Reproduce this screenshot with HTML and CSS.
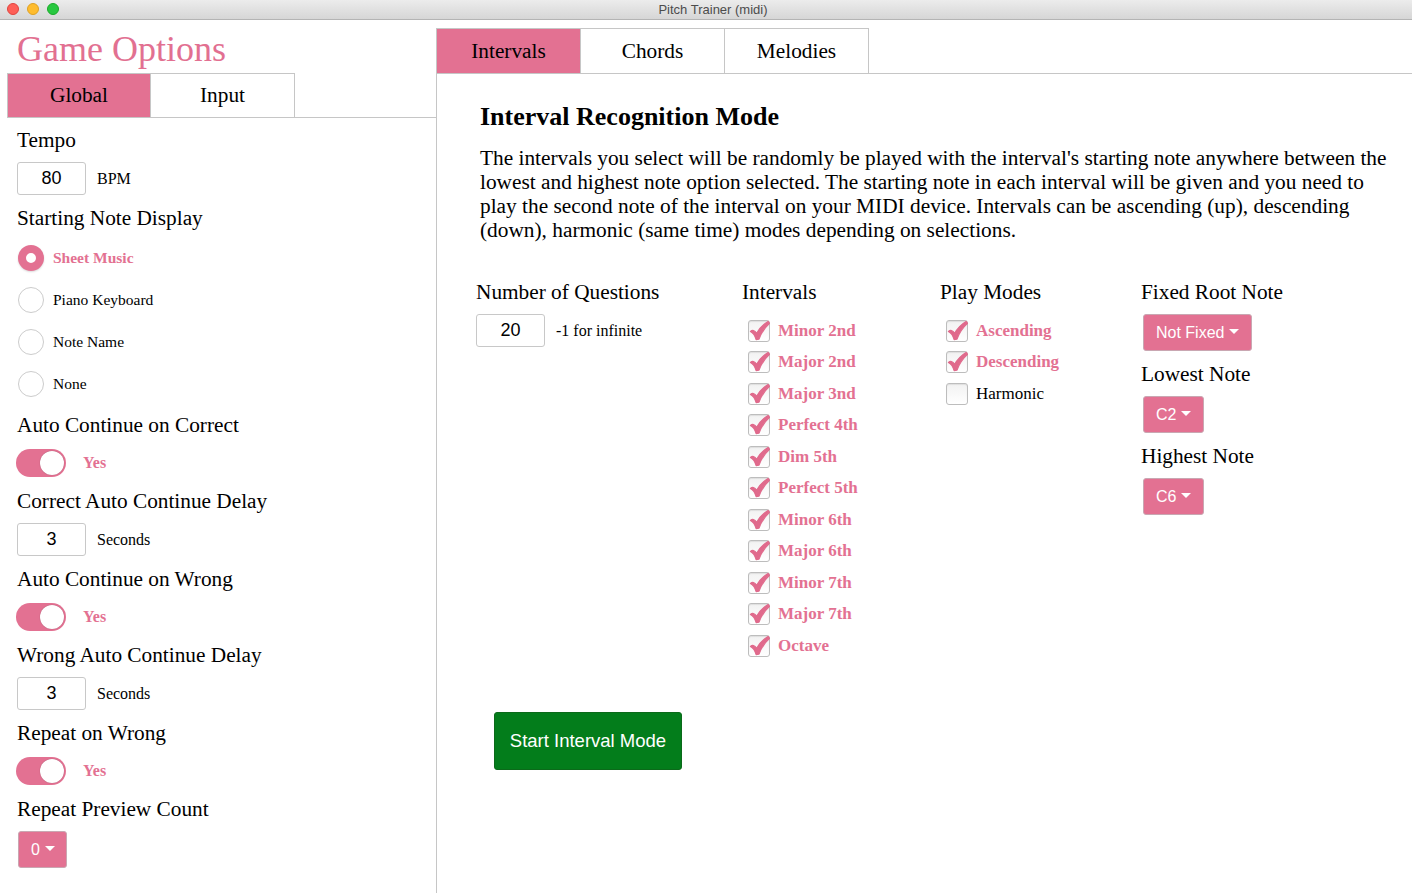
FILE: index.html
```html
<!DOCTYPE html>
<html>
<head>
<meta charset="utf-8">
<title>Pitch Trainer (midi)</title>
<link rel="stylesheet" href="styles.css">
</head>
<body>
<div class="window">
  <div class="titlebar">
    <div class="lights">
      <span class="light red"></span>
      <span class="light yellow"></span>
      <span class="light green"></span>
    </div>
    <div class="title">Pitch Trainer (midi)</div>
  </div>
  <div class="main">
    <aside class="options">
      <h1 class="options-title">Game Options</h1>
      <div class="tabs tabs-left">
        <div class="tab active">Global</div>
        <div class="tab">Input</div>
      </div>
      <div class="opt-body">
        <div class="label">Tempo</div>
        <div class="ctrl">
          <div class="num">80</div><span class="unit">BPM</span>
        </div>
        <div class="label">Starting Note Display</div>
        <div class="radios">
          <div class="radio-row"><span class="radio on"></span><span class="rlabel on">Sheet Music</span></div>
          <div class="radio-row"><span class="radio"></span><span class="rlabel">Piano Keyboard</span></div>
          <div class="radio-row"><span class="radio"></span><span class="rlabel">Note Name</span></div>
          <div class="radio-row"><span class="radio"></span><span class="rlabel">None</span></div>
        </div>
        <div class="label">Auto Continue on Correct</div>
        <div class="ctrl toggle-row"><span class="toggle"><span class="knob"></span></span><span class="yes">Yes</span></div>
        <div class="label">Correct Auto Continue Delay</div>
        <div class="ctrl">
          <div class="num">3</div><span class="unit">Seconds</span>
        </div>
        <div class="label">Auto Continue on Wrong</div>
        <div class="ctrl toggle-row"><span class="toggle"><span class="knob"></span></span><span class="yes">Yes</span></div>
        <div class="label">Wrong Auto Continue Delay</div>
        <div class="ctrl">
          <div class="num">3</div><span class="unit">Seconds</span>
        </div>
        <div class="label">Repeat on Wrong</div>
        <div class="ctrl toggle-row"><span class="toggle"><span class="knob"></span></span><span class="yes">Yes</span></div>
        <div class="label">Repeat Preview Count</div>
        <div class="ctrl">
          <div class="dropdown small">0<span class="caret"></span></div>
        </div>
      </div>
    </aside>
    <section class="modes">
      <div class="tabs tabs-right">
        <div class="tab active">Intervals</div>
        <div class="tab">Chords</div>
        <div class="tab">Melodies</div>
      </div>
      <div class="mode-body">
        <h2 class="mode-title">Interval Recognition Mode</h2>
        <p class="desc">The intervals you select will be randomly be played with the interval's starting note anywhere between the lowest and highest note option selected. The starting note in each interval will be given and you need to play the second note of the interval on your MIDI device. Intervals can be ascending (up), descending (down), harmonic (same time) modes depending on selections.</p>
        <div class="grid">
          <div class="col">
            <div class="label">Number of Questions</div>
            <div class="ctrl">
              <div class="num">20</div><span class="unit">-1 for infinite</span>
            </div>
          </div>
          <div class="col">
            <div class="label">Intervals</div>
            <div class="checks">
              <div class="check-row"><span class="cbox"><svg viewBox="0 0 22 22"><path d="M1.5 12 C3.5 10.2 5.8 10.5 8 14 C11 8.5 15 4.5 20 1.5 L21.5 3.5 C16.5 8 13 13 10.5 20 L7.5 20.5 C6.5 17 4.5 13.5 1.5 12 Z"/></svg></span><span class="clabel on">Minor 2nd</span></div>
              <div class="check-row"><span class="cbox"><svg viewBox="0 0 22 22"><path d="M1.5 12 C3.5 10.2 5.8 10.5 8 14 C11 8.5 15 4.5 20 1.5 L21.5 3.5 C16.5 8 13 13 10.5 20 L7.5 20.5 C6.5 17 4.5 13.5 1.5 12 Z"/></svg></span><span class="clabel on">Major 2nd</span></div>
              <div class="check-row"><span class="cbox"><svg viewBox="0 0 22 22"><path d="M1.5 12 C3.5 10.2 5.8 10.5 8 14 C11 8.5 15 4.5 20 1.5 L21.5 3.5 C16.5 8 13 13 10.5 20 L7.5 20.5 C6.5 17 4.5 13.5 1.5 12 Z"/></svg></span><span class="clabel on">Major 3nd</span></div>
              <div class="check-row"><span class="cbox"><svg viewBox="0 0 22 22"><path d="M1.5 12 C3.5 10.2 5.8 10.5 8 14 C11 8.5 15 4.5 20 1.5 L21.5 3.5 C16.5 8 13 13 10.5 20 L7.5 20.5 C6.5 17 4.5 13.5 1.5 12 Z"/></svg></span><span class="clabel on">Perfect 4th</span></div>
              <div class="check-row"><span class="cbox"><svg viewBox="0 0 22 22"><path d="M1.5 12 C3.5 10.2 5.8 10.5 8 14 C11 8.5 15 4.5 20 1.5 L21.5 3.5 C16.5 8 13 13 10.5 20 L7.5 20.5 C6.5 17 4.5 13.5 1.5 12 Z"/></svg></span><span class="clabel on">Dim 5th</span></div>
              <div class="check-row"><span class="cbox"><svg viewBox="0 0 22 22"><path d="M1.5 12 C3.5 10.2 5.8 10.5 8 14 C11 8.5 15 4.5 20 1.5 L21.5 3.5 C16.5 8 13 13 10.5 20 L7.5 20.5 C6.5 17 4.5 13.5 1.5 12 Z"/></svg></span><span class="clabel on">Perfect 5th</span></div>
              <div class="check-row"><span class="cbox"><svg viewBox="0 0 22 22"><path d="M1.5 12 C3.5 10.2 5.8 10.5 8 14 C11 8.5 15 4.5 20 1.5 L21.5 3.5 C16.5 8 13 13 10.5 20 L7.5 20.5 C6.5 17 4.5 13.5 1.5 12 Z"/></svg></span><span class="clabel on">Minor 6th</span></div>
              <div class="check-row"><span class="cbox"><svg viewBox="0 0 22 22"><path d="M1.5 12 C3.5 10.2 5.8 10.5 8 14 C11 8.5 15 4.5 20 1.5 L21.5 3.5 C16.5 8 13 13 10.5 20 L7.5 20.5 C6.5 17 4.5 13.5 1.5 12 Z"/></svg></span><span class="clabel on">Major 6th</span></div>
              <div class="check-row"><span class="cbox"><svg viewBox="0 0 22 22"><path d="M1.5 12 C3.5 10.2 5.8 10.5 8 14 C11 8.5 15 4.5 20 1.5 L21.5 3.5 C16.5 8 13 13 10.5 20 L7.5 20.5 C6.5 17 4.5 13.5 1.5 12 Z"/></svg></span><span class="clabel on">Minor 7th</span></div>
              <div class="check-row"><span class="cbox"><svg viewBox="0 0 22 22"><path d="M1.5 12 C3.5 10.2 5.8 10.5 8 14 C11 8.5 15 4.5 20 1.5 L21.5 3.5 C16.5 8 13 13 10.5 20 L7.5 20.5 C6.5 17 4.5 13.5 1.5 12 Z"/></svg></span><span class="clabel on">Major 7th</span></div>
              <div class="check-row"><span class="cbox"><svg viewBox="0 0 22 22"><path d="M1.5 12 C3.5 10.2 5.8 10.5 8 14 C11 8.5 15 4.5 20 1.5 L21.5 3.5 C16.5 8 13 13 10.5 20 L7.5 20.5 C6.5 17 4.5 13.5 1.5 12 Z"/></svg></span><span class="clabel on">Octave</span></div>
            </div>
          </div>
          <div class="col">
            <div class="label">Play Modes</div>
            <div class="checks">
              <div class="check-row"><span class="cbox"><svg viewBox="0 0 22 22"><path d="M1.5 12 C3.5 10.2 5.8 10.5 8 14 C11 8.5 15 4.5 20 1.5 L21.5 3.5 C16.5 8 13 13 10.5 20 L7.5 20.5 C6.5 17 4.5 13.5 1.5 12 Z"/></svg></span><span class="clabel on">Ascending</span></div>
              <div class="check-row"><span class="cbox"><svg viewBox="0 0 22 22"><path d="M1.5 12 C3.5 10.2 5.8 10.5 8 14 C11 8.5 15 4.5 20 1.5 L21.5 3.5 C16.5 8 13 13 10.5 20 L7.5 20.5 C6.5 17 4.5 13.5 1.5 12 Z"/></svg></span><span class="clabel on">Descending</span></div>
              <div class="check-row"><span class="cbox"></span><span class="clabel">Harmonic</span></div>
            </div>
          </div>
          <div class="col">
            <div class="label">Fixed Root Note</div>
            <div class="ctrl ctrl-dd">
              <div class="dropdown">Not Fixed<span class="caret"></span></div>
            </div>
            <div class="label">Lowest Note</div>
            <div class="ctrl ctrl-dd">
              <div class="dropdown">C2<span class="caret"></span></div>
            </div>
            <div class="label">Highest Note</div>
            <div class="ctrl ctrl-dd">
              <div class="dropdown">C6<span class="caret"></span></div>
            </div>
          </div>
        </div>
        <div class="start">Start Interval Mode</div>
      </div>
    </section>
  </div>
</div>
</body>
</html>
```

FILE: styles.css
```css
* { box-sizing: border-box; }
html, body { margin: 0; padding: 0; background: #fff; }
body {
  width: 1412px;
  height: 893px;
  overflow: hidden;
  font-family: "Liberation Serif", "Times New Roman", serif;
  color: #000;
}
.window { display: flex; flex-direction: column; height: 893px; }

.titlebar {
  height: 20px;
  flex: none;
  background: linear-gradient(#ececec, #d6d6d6);
  border-bottom: 1px solid #b4b4b4;
  display: flex;
  align-items: center;
  justify-content: center;
  padding-left: 14px;
  position: relative;
}
.lights { position: absolute; left: 7px; top: 3px; display: flex; gap: 8px; }
.light { width: 12px; height: 12px; border-radius: 50%; display: block; }
.light.red { background: #fe5f57; border: 1px solid #e0443e; }
.light.yellow { background: #febc2e; border: 1px solid #dea123; }
.light.green { background: #28c840; border: 1px solid #1aab29; }
.title {
  font-family: "Liberation Sans", Arial, sans-serif;
  font-size: 13px;
  color: #4c4c4c;
  line-height: 19px;
}

.main { display: flex; flex: 1; min-height: 0; }

.options { width: 436px; flex: none; }
.options-title {
  margin: 0 0 3px 17px;
  padding-top: 8px;
  font-weight: normal;
  font-size: 36px;
  line-height: 42px;
  color: #e27091;
}

.tabs { display: flex; border-bottom: 1px solid #c6c6c6; }
.tab {
  width: 144px;
  text-align: center;
  font-size: 21.3px;
  border-top: 1px solid #c6c6c6;
  border-right: 1px solid #c6c6c6;
}
.tab.active { background: #e37192; }
.tabs-left { margin-left: 7px; }
.tabs-left .tab { height: 44px; line-height: 43px; }
.tabs-left .tab:first-child { border-left: 1px solid #c6c6c6; }
.tabs-right .tab { height: 45px; line-height: 44px; }

.opt-body { padding: 9px 0 0 17px; display: flex; flex-direction: column; align-items: flex-start; }
.label { font-size: 21.3px; line-height: 26px; white-space: nowrap; }
.ctrl { margin: 9px 0 10px; display: flex; align-items: center; }
.num {
  width: 69px;
  height: 33px;
  border: 1px solid #c8c8c8;
  border-radius: 3px;
  font-family: "Liberation Sans", Arial, sans-serif;
  font-size: 18px;
  line-height: 31px;
  text-align: center;
}
.unit { font-size: 16px; margin-left: 11px; }

.radios { margin: 6px 0 7px; }
.radio-row { height: 42px; display: flex; align-items: center; }
.radio {
  width: 26px;
  height: 26px;
  border-radius: 50%;
  border: 1px solid #cccccc;
  margin-left: 1px;
  display: block;
}
.radio.on {
  border: 8px solid #e37192;
  background: #fff;
  box-shadow: 0 1px 2px rgba(0,0,0,0.15);
}
.rlabel { font-size: 15.5px; margin-left: 9px; }
.rlabel.on { color: #e37192; font-weight: bold; }

.toggle-row { height: 32px; margin: 9px 0 9px; }
.toggle {
  width: 50px;
  height: 28px;
  border-radius: 14px;
  background: #e37192;
  display: block;
  position: relative;
  margin-left: -1px;
}
.knob {
  position: absolute;
  right: 2px;
  top: 2px;
  width: 24px;
  height: 24px;
  border-radius: 50%;
  background: #fff;
  box-shadow: 0 0 1px rgba(0,0,0,0.35);
}
.yes { color: #e37192; font-weight: bold; font-size: 16px; margin-left: 17px; }

.dropdown {
  height: 37px;
  padding: 0 12px 0 12px;
  border: 1px solid #c9a7b2;
  border-radius: 3px;
  background: #e37192;
  color: #fff;
  font-family: "Liberation Sans", Arial, sans-serif;
  font-size: 16px;
  line-height: 35px;
  display: flex;
  align-items: center;
}
.dropdown.small { padding: 0 11px 0 12px; margin-left: 1px; }
.caret {
  width: 0;
  height: 0;
  border-left: 5px solid transparent;
  border-right: 5px solid transparent;
  border-top: 5px solid #fff;
  margin-left: 5px;
  margin-top: -2px;
}

.modes { flex: 1; border-left: 1px solid #c6c6c6; margin-top: 8px; }
.mode-body { padding-left: 43px; }
.mode-title {
  margin: 28px 0 0;
  font-size: 26px;
  line-height: 30px;
  font-weight: bold;
}
.desc {
  margin: 14px 0 0;
  width: 918px;
  font-size: 21.33px;
  line-height: 24px;
}

.grid {
  display: grid;
  grid-template-columns: 266px 198px 201px 1fr;
  margin: 37px 0 0 -4px;
}
.col { display: flex; flex-direction: column; align-items: flex-start; }
.checks { margin-top: 10px; }
.check-row { height: 31.5px; display: flex; align-items: center; }
.cbox {
  width: 22px;
  height: 22px;
  margin-left: 6px;
  border: 1px solid #bdbdbd;
  border-radius: 3px;
  background: linear-gradient(#f2f2f2, #ffffff);
  box-shadow: inset 0 1px 1px rgba(0,0,0,0.08);
  position: relative;
  display: block;
}
.cbox svg {
  position: absolute;
  left: 0;
  top: -1px;
  width: 21px;
  height: 21px;
  fill: #e06a8c;
  stroke: #e06a8c;
  stroke-width: 1.3;
  stroke-linejoin: round;
}
.clabel { font-size: 17px; margin-left: 8px; }
.clabel.on { color: #e37192; font-weight: bold; }
.ctrl-dd { margin: 9px 0 10px 2px; }

.start {
  display: inline-block;
  margin: 50px 0 0 14px;
  width: 188px;
  height: 58px;
  background: #037d1b;
  border: 1px solid #0b6a1a;
  border-radius: 3px;
  color: #fff;
  font-family: "Liberation Sans", Arial, sans-serif;
  font-size: 18.5px;
  line-height: 56px;
  text-align: center;
}
```
